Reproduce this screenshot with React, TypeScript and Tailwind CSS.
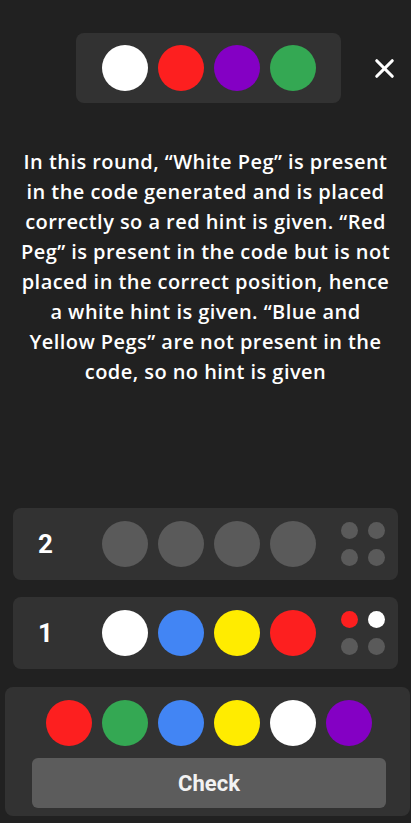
import { X } from "lucide-react";

const PEG = {
  white: "#ffffff",
  red: "#fd1f1f",
  purple: "#8400c4",
  green: "#34a853",
  blue: "#4285f4",
  yellow: "#ffec00",
  empty: "#5a5a5a",
};

const Peg = ({ color }: { color: string }) => (
  <div className="h-[46px] w-[46px] rounded-full" style={{ backgroundColor: color }} />
);

const Hint = ({ color }: { color: string }) => (
  <div className="h-[17px] w-[17px] rounded-full" style={{ backgroundColor: color }} />
);

const GuessRow = ({ n, pegs, hints }: { n: number; pegs: string[]; hints: string[] }) => (
  <div className="mx-[13px] flex h-[72px] items-center rounded-lg bg-[#323232] pl-[25px] pr-[13px]">
    <div className="w-[64px] font-['Roboto'] text-[26px] font-bold text-white">{n}</div>
    <div className="flex gap-[10px]">
      {pegs.map((c, i) => (
        <Peg key={i} color={c} />
      ))}
    </div>
    <div className="ml-auto grid grid-cols-2 gap-[10px]">
      {hints.map((c, i) => (
        <Hint key={i} color={c} />
      ))}
    </div>
  </div>
);

export default function App() {
  return (
    <div className="flex h-[823px] w-[411px] flex-col bg-[#212121] font-['Open_Sans',sans-serif]">
      {/* Secret code */}
      <div className="mt-[33px] flex items-center">
        <div className="ml-[76px] flex h-[70px] w-[265px] items-center justify-center gap-[10px] rounded-lg bg-[#323232]">
          <Peg color={PEG.white} />
          <Peg color={PEG.red} />
          <Peg color={PEG.purple} />
          <Peg color={PEG.green} />
        </div>
        <X className="ml-[28px] text-white" size={31} strokeWidth={2.4} />
      </div>

      {/* Explanation */}
      <p className="mt-[44px] px-[12px] text-center text-[20px] font-semibold leading-[30px] tracking-[0.45px] text-white">
        In this round, “White Peg” is present<br />
        in the code generated and is placed<br />
        correctly so a red hint is given. “Red<br />
        Peg” is present in the code but is not<br />
        placed in the correct position, hence<br />
        a white hint is given. “Blue and<br />
        Yellow Pegs” are not present in the<br />
        code, so no hint is given
      </p>

      {/* Board */}
      <div className="mt-[121px] flex flex-col gap-[17px]">
        <GuessRow
          n={2}
          pegs={[PEG.empty, PEG.empty, PEG.empty, PEG.empty]}
          hints={[PEG.empty, PEG.empty, PEG.empty, PEG.empty]}
        />
        <GuessRow
          n={1}
          pegs={[PEG.white, PEG.blue, PEG.yellow, PEG.red]}
          hints={[PEG.red, PEG.white, PEG.empty, PEG.empty]}
        />
      </div>

      {/* Picker */}
      <div className="ml-[5px] mt-[18px] w-[405px] rounded-lg bg-[#323232] pb-[8px] pl-[27px] pr-[24px] pt-[13px]">
        <div className="flex justify-center gap-[10px]">
          {[PEG.red, PEG.green, PEG.blue, PEG.yellow, PEG.white, PEG.purple].map((c, i) => (
            <Peg key={i} color={c} />
          ))}
        </div>
        <button className="mt-[12px] flex h-[50px] w-full items-center justify-center rounded-md bg-[#5c5c5c] font-['Roboto'] text-[22px] font-bold text-[#f2f2f2]">
          Check
        </button>
      </div>
    </div>
  );
}
